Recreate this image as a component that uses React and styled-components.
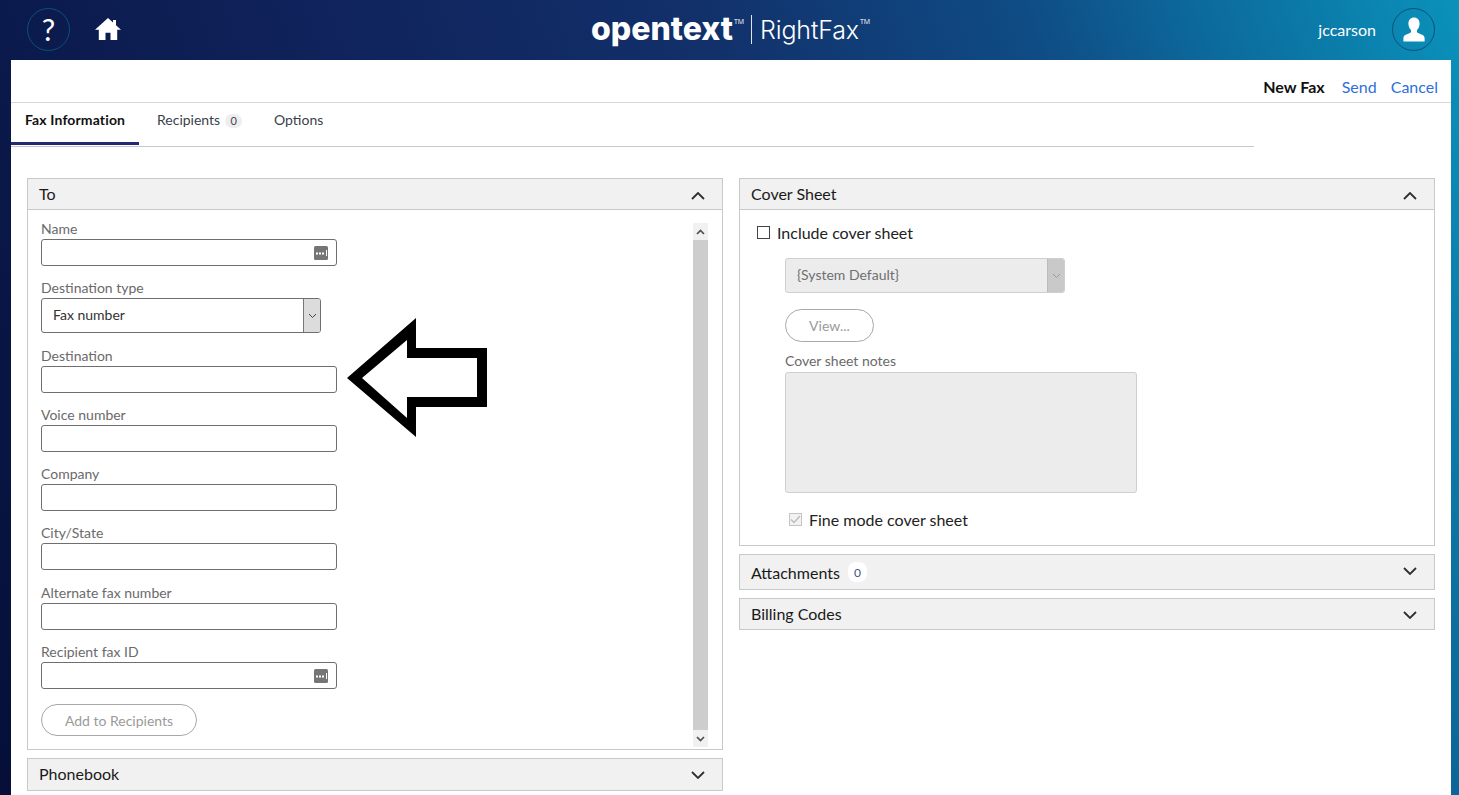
import React from "react";
import styled, { createGlobalStyle } from "styled-components";

const Global = createGlobalStyle`
  html, body { margin: 0; padding: 0; height: 100%; overflow: hidden; }
  body { font-family: Lato, "Open Sans", sans-serif; color: #222; }
  * { box-sizing: border-box; }
`;

const Page = styled.div`
  width: 1459px; height: 795px; overflow: hidden;
  background: linear-gradient(70deg, #050f38 0%, #0b1a4c 16.5%, #10235c 35%, #12306a 56%, #0f4c85 75%, #0c6a9c 85%, #0a92bb 100%);
  display: flex; flex-direction: column;
`;
const Header = styled.header`
  height: 60px; flex: none; position: relative;
  display: flex; align-items: center; padding: 0 24px 2px 27px;
`;
const CircleBtn = styled.div`
  width: 43px; height: 43px; border-radius: 50%; border: 1px solid #0f4f78;
  display: flex; align-items: center; justify-content: center; color: #fff;
  font-size: 30px; font-weight: 400;
`;
const HomeBtn = styled.div`
  margin-left: 25px; width: 26px; height: 24px; display: flex;
`;
const Logo = styled.div`
  position: absolute; left: 591px; top: 13px; height: 32px; display: flex; align-items: center; color: #fff;
`;
const LogoWord = styled.span`
  font-family: Inter, sans-serif; font-weight: 800; font-size: 32px; letter-spacing: 0; line-height: 32px;
`;
const Tm = styled.sup`
  font-family: "Open Sans", sans-serif; font-size: 7px; font-weight: 400; align-self: flex-start; margin: 5px 0 0 1px; line-height: 8px;
`;
const LogoDivider = styled.span`
  width: 1px; height: 29px; background: #dfe6f0; margin: 0 8px 0 7px;
`;
const Product = styled.span`
  font-family: Inter, sans-serif; font-weight: 300; font-size: 25px; line-height: 32px; letter-spacing: -0.15px; margin-top: 1px;
`;
const UserArea = styled.div`
  margin-left: auto; display: flex; align-items: center; gap: 16px; color: #fff; font-size: 16px;
`;
const Main = styled.main`
  flex: 1; margin: 0 8px 0 11px; background: #fff; display: flex; flex-direction: column; min-height: 0;
`;
const ActionBar = styled.div`
  height: 43px; flex: none; border-bottom: 1px solid #d8d8d8;
  display: flex; justify-content: flex-end; align-items: center; gap: 14px; padding: 10px 13px 0 0; font-size: 16px;
`;
const ActionTitle = styled.strong` color: #111; font-weight: 700; margin-right: 3px; letter-spacing: 0.02px; `;
const ActionLink = styled.a` color: #2e6fd9; `;
const TabBar = styled.nav`
  height: 44px; flex: none; width: 1243px; border-bottom: 1px solid #c8c8c8; display: flex;
`;
const Tab = styled.div`
  height: 42px; padding: 7px 14px 0; padding-left: ${p => p.$pl || 14}px; width: ${p => p.$w}px; font-size: 14px; line-height: 20px; display: flex; align-items: flex-start; white-space: nowrap;
  font-weight: ${p => (p.$active ? 700 : 400)}; color: ${p => (p.$active ? "#111" : "#3a3f4a")};
  letter-spacing: ${p => (p.$active ? "0.13px" : "0")};
  border-bottom: ${p => (p.$active ? "3px solid #232c72" : "none")};
`;
const TabCount = styled.span`
  margin: 4px 0 0 5px; width: 17px; height: 14px; border-radius: 7px; background: #eee; color: #445; font-size: 11px; line-height: 14px; text-align: center;
`;
const Columns = styled.div`
  display: grid; grid-template-columns: 696px 696px; gap: 16px; padding: 31px 0 0 16px; flex: 1; min-height: 0;
`;
const Column = styled.div` display: flex; flex-direction: column; gap: 8px; `;
const Panel = styled.section`
  border: 1px solid #c9c9c9; position: relative; flex: none;
`;
const PanelHead = styled.div`
  height: ${p => p.$h || 31}px; background: #f1f1f1; display: flex; align-items: center; justify-content: space-between;
  padding: 0 17px ${p => (p.$flat ? 0 : 2)}px 11px; font-size: 16px; color: #1a1a1a;
  border-bottom: ${p => (p.$open ? "1px solid #c9c9c9" : "none")};
`;
const HeadLabel = styled.span` display: flex; align-items: center; gap: 8px; `;
const HeadCount = styled.span`
  width: 19px; height: 20px; border-radius: 8px; background: #fff; color: #44508c; font-size: 12px; line-height: 21px; text-align: center;
`;
const ToBody = styled.div`
  height: 539px; padding: 12px 14px 0 13px; display: flex; justify-content: space-between; position: relative;
`;
const Form = styled.div` width: 296px; `;
const Field = styled.div` margin-bottom: 15.3px; `;
const Label = styled.label`
  display: block; height: 17px; line-height: 13px; font-size: 14px; color: #6a6a6a; white-space: nowrap;
`;
const InputBox = styled.div`
  height: 27px; border: 1px solid #6f6f6f; border-radius: 3px; background: #fff; display: flex; align-items: center; justify-content: flex-end; padding-right: 8px;
`;
const SelectBox = styled.div`
  width: ${p => p.$w}px; height: 35px; border: 1px solid ${p => (p.$disabled ? "#cfcfcf" : "#6f6f6f")}; border-radius: 3px;
  background: ${p => (p.$disabled ? "#ececec" : "#fff")}; display: flex; align-items: stretch; justify-content: space-between; overflow: hidden;
  color: ${p => (p.$disabled ? "#6f6f6f" : "#333")}; font-size: 14px;
`;
const SelectText = styled.span` padding-left: 11px; line-height: 32px; `;
const SelectArrow = styled.span`
  width: 17px; background: ${p => (p.$disabled ? "#c9c9c9" : "#dcdcdc")}; border-left: 1px solid ${p => (p.$disabled ? "#bbb" : "#777")}; display: flex; align-items: center; justify-content: center;
`;
const PillButton = styled.div`
  width: ${p => p.$w}px; height: ${p => p.$h}px; border: 1px solid #a8a8a8; border-radius: 17px; color: #9a9a9a; font-size: 14px;
  display: flex; align-items: center; justify-content: center; background: #fff;
`;
const AddWrap = styled.div` margin-top: 3.8px; `;
const Scrollbar = styled.div`
  width: 15px; height: 524px; margin-top: 1px; background: #f1f1f1; display: flex; flex-direction: column; align-items: center; justify-content: space-between;
`;
const ScrollCap = styled.div` height: 17px; display: flex; align-items: center; justify-content: center; `;
const ScrollThumb = styled.div` width: 15px; flex: 1; background: #cdcdcd; `;
const ArrowMark = styled.svg` position: absolute; left: 319px; top: 108px; `;
const CoverBody = styled.div` height: 335px; padding: 14px 0 0 17px; `;
const CheckRow = styled.div`
  display: flex; align-items: center; height: 16px; font-size: 16px; color: #222; margin-left: ${p => p.$ml || 0}px;
`;
const CheckBox = styled.span`
  width: 13px; height: 13px; border: 1px solid ${p => (p.$disabled ? "#c4c4c4" : "#444")}; margin-right: 7px; display: flex; align-items: center; justify-content: center;
  background: ${p => (p.$disabled ? "#f2f2f2" : "#fff")};
`;
const Indented = styled.div` margin: 18px 0 0 28px; `;
const ViewWrap = styled.div` margin: 16px 0 0; `;
const NotesLabel = styled(Label)` margin-top: 11px; height: 19px; line-height: 16px; `;
const Notes = styled.div`
  width: 352px; height: 121px; background: #ececec; border: 1px solid #cfcfcf; border-radius: 3px;
`;
const FineRow = styled.div` margin-top: 18px; `;
const ChevronSvg = styled.svg` margin-top: ${p => p.$dy * 2}px; `;

const Chevron = ({ up, dy = 0 }) => (
  <ChevronSvg $dy={dy} width="14" height="8" viewBox="0 0 14 8" fill="none" stroke="#2f2f2f" strokeWidth="1.8">
    <path d={up ? "M1 7l6-6 6 6" : "M1 1l6 6 6-6"} />
  </ChevronSvg>
);
const SmallChevron = ({ color = "#444" }) => (
  <svg width="9" height="6" viewBox="0 0 9 6" fill="none" stroke={color} strokeWidth="1"><path d="M1 1l3.500 3.500L8 1" /></svg>
);
const ScrollArrow = ({ up }) => (
  <svg width="9" height="6" viewBox="0 0 9 6" fill="none" stroke="#505050" strokeWidth="1.7"><path d={up ? "M1 5l3.500-3.500L8 5" : "M1 1l3.500 3.500L8 1"} /></svg>
);
const Browse = () => (
  <svg width="14" height="14" viewBox="0 0 14 14">
    <rect width="14" height="14" rx="1.500" fill="#757575" />
    <path d="M2 6.500h2v2H2zM5 6.500h2v2H5zM8 6.500h2v2H8z" fill="#fff" />
    <rect x="12" y="4" width="1" height="6" fill="#fff" />
  </svg>
);

const fieldsA = ["Destination", "Voice number", "Company", "City/State", "Alternate fax number"];

export default function App() {
  return (
    <Page>
      <Global />
      <Header>
        <CircleBtn>?</CircleBtn>
        <HomeBtn>
          <svg width="26" height="24" viewBox="0 0 26 24" fill="#fff">
            <path d="M13 1 0 12.800h3.800V23h6.700v-7.200h5V23h6.700V12.800H26L21 8.200V3h-3v2.500z" />
          </svg>
        </HomeBtn>
        <Logo>
          <LogoWord>opentext</LogoWord>
          <Tm>TM</Tm>
          <LogoDivider />
          <Product>RightFax</Product>
          <Tm>TM</Tm>
        </Logo>
        <UserArea>
          <span>jccarson</span>
          <CircleBtn>
            <svg width="22" height="25" viewBox="0 0 22 25" fill="#fff">
              <path d="M11 0.500c3.400 0 5.600 2.600 5.600 6 0 2.600-1 5-2.600 6.400v2c0 1 3.400 1.800 5.600 3 1.200.7 2 1.800 2 3.300v3.300H0.400v-3.300c0-1.500.8-2.600 2-3.300 2.200-1.200 5.600-2 5.600-3v-2C6.400 11.500 5.400 9.100 5.400 6.500c0-3.400 2.200-6 5.600-6z" />
            </svg>
          </CircleBtn>
        </UserArea>
      </Header>
      <Main>
        <ActionBar>
          <ActionTitle>New Fax</ActionTitle>
          <ActionLink>Send</ActionLink>
          <ActionLink>Cancel</ActionLink>
        </ActionBar>
        <TabBar>
          <Tab $active $w={128}>Fax Information</Tab>
          <Tab $w={121} $pl={18}>Recipients<TabCount>0</TabCount></Tab>
          <Tab $w={90} $pl={14}>Options</Tab>
        </TabBar>
        <Columns>
          <Column>
            <Panel>
              <PanelHead $open>To<Chevron up dy={3} /></PanelHead>
              <ToBody>
                <Form>
                  <Field>
                    <Label>Name</Label>
                    <InputBox><Browse /></InputBox>
                  </Field>
                  <Field>
                    <Label>Destination type</Label>
                    <SelectBox $w={280}>
                      <SelectText>Fax number</SelectText>
                      <SelectArrow><SmallChevron /></SelectArrow>
                    </SelectBox>
                  </Field>
                  {fieldsA.map(f => (
                    <Field key={f}>
                      <Label>{f}</Label>
                      <InputBox />
                    </Field>
                  ))}
                  <Field>
                    <Label>Recipient fax ID</Label>
                    <InputBox><Browse /></InputBox>
                  </Field>
                  <AddWrap><PillButton $w={156} $h={32}>Add to Recipients</PillButton></AddWrap>
                </Form>
                <Scrollbar>
                  <ScrollCap><ScrollArrow up /></ScrollCap>
                  <ScrollThumb />
                  <ScrollCap><ScrollArrow /></ScrollCap>
                </Scrollbar>
                <ArrowMark width="140" height="120" viewBox="0 0 140 120">
                  <path fillRule="evenodd" d="M0 60 69 0V30H140V89H69V119ZM15 60 60 100V79H130V40H60V22Z" fill="#000" />
                </ArrowMark>
              </ToBody>
            </Panel>
            <Panel><PanelHead>Phonebook<Chevron dy={1} /></PanelHead></Panel>
          </Column>
          <Column>
            <Panel>
              <PanelHead $open>Cover Sheet<Chevron up dy={3} /></PanelHead>
              <CoverBody>
                <CheckRow><CheckBox />Include cover sheet</CheckRow>
                <Indented>
                  <SelectBox $w={280} $disabled>
                    <SelectText>{"{System Default}"}</SelectText>
                    <SelectArrow $disabled><SmallChevron color="#9a9a9a" /></SelectArrow>
                  </SelectBox>
                  <ViewWrap><PillButton $w={89} $h={33}>View...</PillButton></ViewWrap>
                  <NotesLabel>Cover sheet notes</NotesLabel>
                  <Notes />
                  <FineRow>
                    <CheckRow $ml={4}>
                      <CheckBox $disabled>
                        <svg width="11" height="9" viewBox="0 0 11 9" fill="none" stroke="#bdbdbd" strokeWidth="1.500"><path d="M1 4.500 4 7.500 10 1" /></svg>
                      </CheckBox>
                      Fine mode cover sheet
                    </CheckRow>
                  </FineRow>
                </Indented>
              </CoverBody>
            </Panel>
            <Panel>
              <PanelHead $h={34} $flat><HeadLabel>Attachments<HeadCount>0</HeadCount></HeadLabel><Chevron dy={-1} /></PanelHead>
            </Panel>
            <Panel><PanelHead $h={30}>Billing Codes<Chevron dy={2} /></PanelHead></Panel>
          </Column>
        </Columns>
      </Main>
    </Page>
  );
}
